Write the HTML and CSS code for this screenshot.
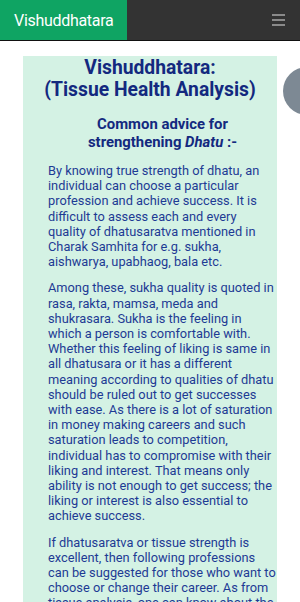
FILE: index.html
```html
<!DOCTYPE html>
<html lang="en">
<head>
    <meta charset="UTF-8">
    <meta name="viewport" content="width=device-width, initial-scale=1.0">
    <title>Vishuddhatara</title>
    <link rel="stylesheet" href="styles.css">
</head>
<body>
    <div class="topbar">
        <div class="brand">Vishuddhatara</div>
        <div class="menu-btn">
            <span></span><span></span><span></span>
        </div>
    </div>

    <div class="float-btn"></div>

    <div class="card">
        <h1>Vishuddhatara:<br>(Tissue Health Analysis)</h1>
        <div class="content">
            <h2>Common advice for<br>strengthening <em>Dhatu</em> :-</h2>
            <p>By knowing true strength of dhatu, an individual can choose a particular profession and achieve success. It is difficult to assess each and every quality of dhatusaratva mentioned in Charak Samhita for e.g. sukha, aishwarya, upabhaog, bala etc.</p>
            <p>Among these, sukha quality is quoted in rasa, rakta, mamsa, meda and shukrasara. Sukha is the feeling in which a person is comfortable with. Whether this feeling of liking is same in all dhatusara or it has a different meaning according to qualities of dhatu should be ruled out to get successes with ease. As there is a lot of saturation in money making careers and such saturation leads to competition, individual has to compromise with their liking and interest. That means only ability is not enough to get success; the liking or interest is also essential to achieve success.</p>
            <p>If dhatusaratva or tissue strength is excellent, then following professions can be suggested for those who want to choose or change their career. As from tissue analysis, one can know about the strength of each dhatu, the profession can be selected accordingly.</p>
        </div>
    </div>
</body>
</html>
```

FILE: styles.css
```css
body {
    margin: 0;
    font-family: Roboto, 'Noto Sans', Arial, sans-serif;
    background-color: #fff;
    overflow-x: hidden;
}
.topbar {
    display: flex;
    justify-content: space-between;
    align-items: center;
    height: 40px;
    background-color: #333;
    border-bottom: 1px solid #111;
}
.brand {
    background-color: #0fa463;
    color: white;
    font-size: 16px;
    letter-spacing: -0.3px;
    height: 100%;
    width: 127px;
    box-sizing: border-box;
    padding-left: 14px;
    display: flex;
    align-items: center;
}
.menu-btn {
    display: flex;
    flex-direction: column;
    gap: 3px;
    width: 13px;
    margin-right: 15px;
}
.menu-btn span {
    display: block;
    height: 2px;
    background-color: #8a8a8a;
}
.float-btn {
    position: absolute;
    top: 67px;
    left: 283px;
    width: 48px;
    height: 48px;
    border-radius: 50%;
    background-color: #7d8994;
}
.card {
    background-color: #d4f2e4;
    margin: 15px 23px 0;
    padding-bottom: 10px;
}
.card h1 {
    margin: 0;
    padding-top: 1px;
    text-align: center;
    color: #13297f;
    font-size: 19.3px;
    line-height: 22px;
    font-weight: bold;
}
.content {
    padding: 0 0 0 25px;
}
.content h2 {
    text-align: center;
    color: #13297f;
    font-size: 14.9px;
    line-height: 18px;
    font-weight: bold;
    margin: 14px 0 12px;
}
.content p {
    color: #1e3b94;
    font-size: 12.8px;
    line-height: 15.2px;
    margin: 0 0 11px;
}
```
